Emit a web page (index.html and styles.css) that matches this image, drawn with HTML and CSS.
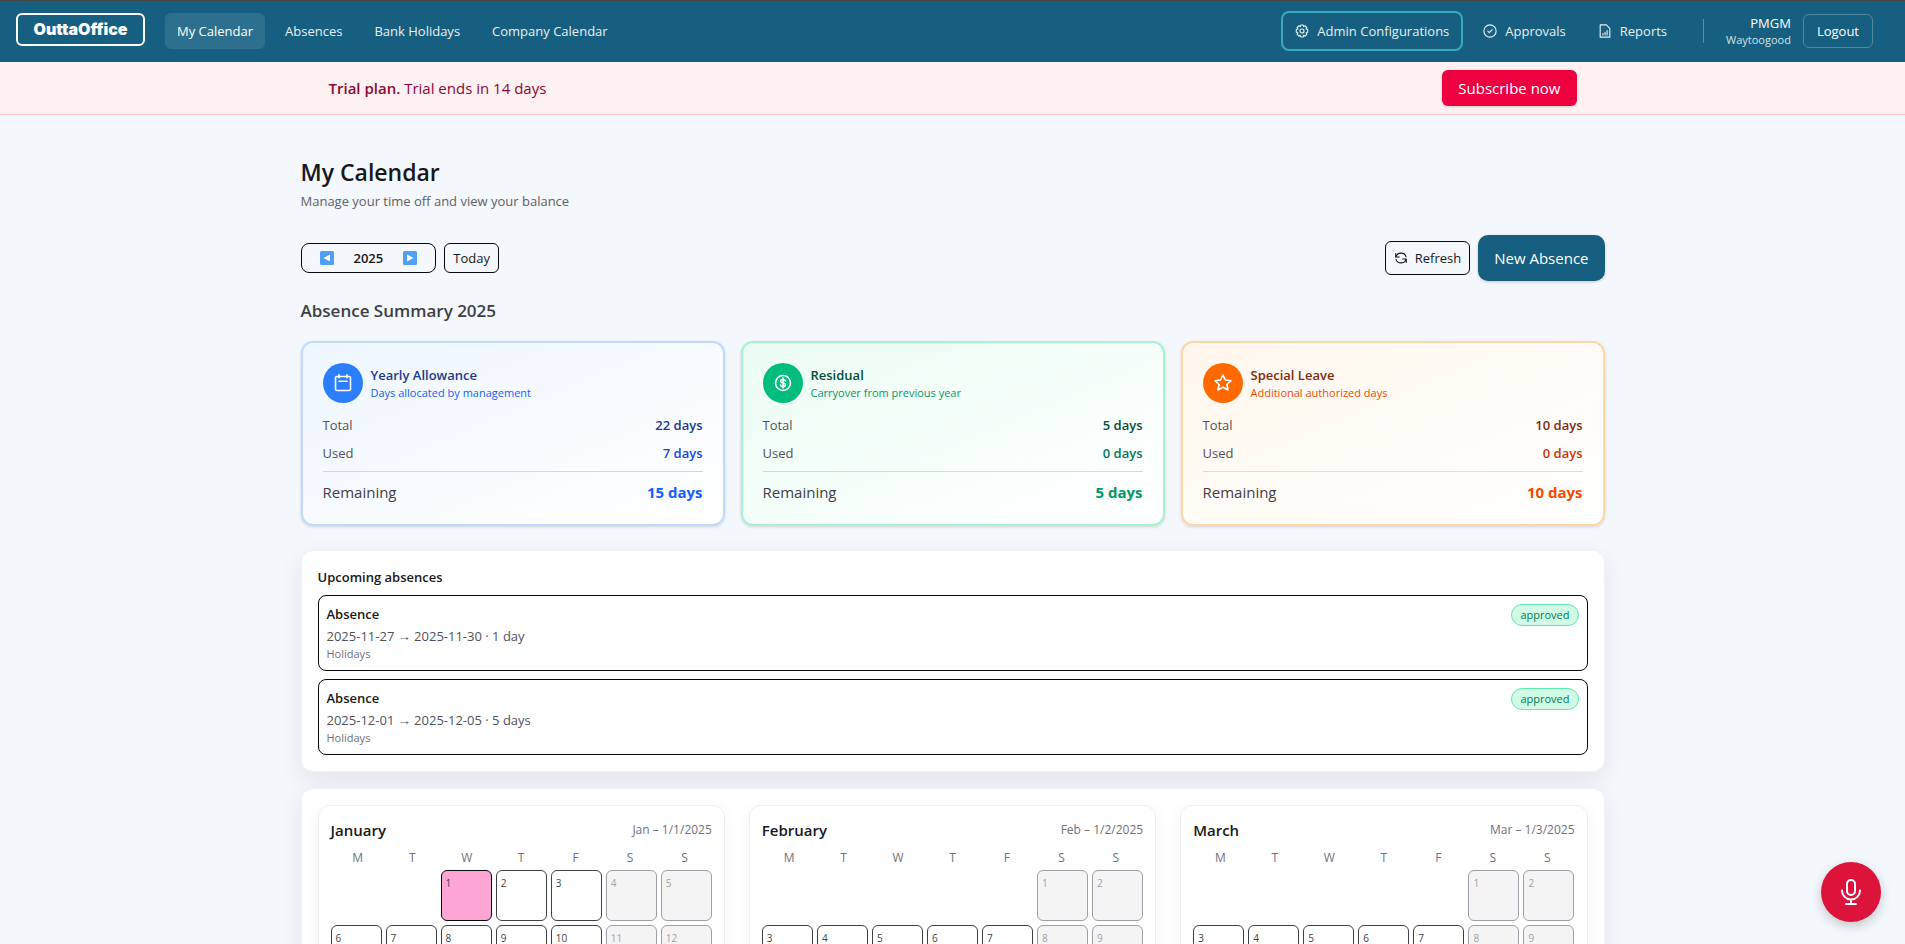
FILE: index.html
```html
<!DOCTYPE html>
<html lang="en">
<head>
  <meta charset="UTF-8" />
  <meta name="viewport" content="width=device-width, initial-scale=1.0"/>
  <title>My Calendar - OuttaOffice</title>
  <link rel="stylesheet" href="styles.css">
</head>
<body>
  <header class="navbar">
    <a class="logo" href="#">OuttaOffice</a>
    <nav class="nav-links">
      <a class="nav-link active" href="#">My Calendar</a>
      <a class="nav-link" href="#">Absences</a>
      <a class="nav-link" href="#">Bank Holidays</a>
      <a class="nav-link" href="#">Company Calendar</a>
    </nav>
    <nav class="nav-links nav-admin">
      <a class="nav-link outlined" href="#">
        <svg class="icon" viewBox="0 0 16 16"><path d="M6.600 1.200h2.800l.5 1.700 1.600-.9 2 2-.9 1.600 1.900.7v3.200l-1.900.7.9 1.600-2 2-1.600-.9-.5 1.900H6.600l-.5-1.900-1.600.9-2-2 .9-1.600-1.900-.7V6.300l1.900-.7-.9-1.600 2-2 1.600.9z"/><circle cx="8" cy="8" r="2.300"/></svg>
        Admin Configurations
      </a>
      <a class="nav-link" href="#">
        <svg class="icon" viewBox="0 0 16 16"><circle cx="8" cy="8" r="7"/><path d="M5.500 8.200l1.700 1.700 3.300-3.500"/></svg>
        Approvals
      </a>
      <a class="nav-link" href="#">
        <svg class="icon" viewBox="0 0 16 16"><path d="M3.500 1h6l4 4v10h-11V1z"/><path d="M5.600 12.500v-1.500M8 12.500V9.500M10.400 12.500V7.500"/></svg>
        Reports
      </a>
    </nav>
    <span class="nav-divider"></span>
    <div class="user">
      <span class="user-name">PMGM</span>
      <span class="user-company">Waytoogood</span>
    </div>
    <button class="logout" type="button">Logout</button>
  </header>

  <!-- Trial banner -->
  <div class="banner">
    <div class="banner-inner">
      <p><strong>Trial plan.</strong> Trial ends in 14 days</p>
      <button class="subscribe" type="button">Subscribe now</button>
    </div>
  </div>

  <main class="content">
    <h1>My Calendar</h1>
    <p class="subtitle">Manage your time off and view your balance</p>

    <div class="toolbar">
      <div class="year-picker">
        <button type="button" aria-label="Previous year"><svg class="arrow" viewBox="0 0 14 14"><rect width="14" height="14" rx="1.500"/><path d="M10 3.500v7L3.500 7z"/></svg></button>
        <span>2025</span>
        <button type="button" aria-label="Next year"><svg class="arrow" viewBox="0 0 14 14"><rect width="14" height="14" rx="1.500"/><path d="M4 3.500v7L10.500 7z"/></svg></button>
      </div>
      <button class="btn-small" type="button">Today</button>
      <button class="btn-refresh" type="button">
        <svg class="icon" viewBox="0 0 16 16"><path d="M2 2.800v4h4M14 13.200v-4h-4"/><path d="M2.300 6.500A6 6 0 0 1 13.700 6.500M13.700 9.500A6 6 0 0 1 2.300 9.500"/></svg>
        Refresh
      </button>
      <button class="btn-new" type="button">New Absence</button>
    </div>

    <h2>Absence Summary 2025</h2>

    <div class="summary">
      <section class="card blue">
        <div class="card-head">
          <span class="card-icon"><svg viewBox="0 0 20 20"><rect x="2.500" y="3.500" width="15" height="14" rx="1.500"/><path d="M6 1.800v3M14 1.800v3M6 8.200h8"/></svg></span>
          <div>
            <h3>Yearly Allowance</h3>
            <p>Days allocated by management</p>
          </div>
        </div>
        <div class="row"><span>Total</span><b class="total">22 days</b></div>
        <div class="row"><span>Used</span><b class="used">7 days</b></div>
        <div class="row remaining"><span>Remaining</span><b>15 days</b></div>
      </section>

      <section class="card green">
        <div class="card-head">
          <span class="card-icon"><svg viewBox="0 0 20 20"><circle cx="10" cy="10" r="7.500"/><path d="M12.500 7.800c-.4-.9-1.300-1.300-2.500-1.300-1.400 0-2.400.6-2.400 1.700 0 2.500 4.900 1.100 4.900 3.600 0 1.100-1.100 1.700-2.500 1.700-1.200 0-2.200-.5-2.600-1.400M10 5v10"/></svg></span>
          <div>
            <h3>Residual</h3>
            <p>Carryover from previous year</p>
          </div>
        </div>
        <div class="row"><span>Total</span><b class="total">5 days</b></div>
        <div class="row"><span>Used</span><b class="used">0 days</b></div>
        <div class="row remaining"><span>Remaining</span><b>5 days</b></div>
      </section>

      <section class="card orange">
        <div class="card-head">
          <span class="card-icon"><svg viewBox="0 0 20 20"><path d="M10 2l2.400 5 5.600.7-4.100 3.800 1.100 5.500-5-2.700L5 17l1.100-5.500L2 7.700 7.600 7z"/></svg></span>
          <div>
            <h3>Special Leave</h3>
            <p>Additional authorized days</p>
          </div>
        </div>
        <div class="row"><span>Total</span><b class="total">10 days</b></div>
        <div class="row"><span>Used</span><b class="used">0 days</b></div>
        <div class="row remaining"><span>Remaining</span><b>10 days</b></div>
      </section>
    </div>

    <!-- Upcoming absences -->
    <section class="panel upcoming">
      <h3>Upcoming absences</h3>
      <ul class="absences">
        <li>
          <div class="absence-head"><b>Absence</b><span class="badge">approved</span></div>
          <p class="dates">2025-11-27 → 2025-11-30 · 1 day</p>
          <p class="type">Holidays</p>
        </li>
        <li>
          <div class="absence-head"><b>Absence</b><span class="badge">approved</span></div>
          <p class="dates">2025-12-01 → 2025-12-05 · 5 days</p>
          <p class="type">Holidays</p>
        </li>
      </ul>
    </section>

    <!-- Year calendar -->
    <section class="panel months">
      <article class="month">
        <div class="month-head"><h3>January</h3><span>Jan – 1/1/2025</span></div>
        <div class="weekdays"><span>M</span><span>T</span><span>W</span><span>T</span><span>F</span><span>S</span><span>S</span></div>
        <div class="days">
          <span></span><span></span>
          <button class="day holiday" type="button">1</button>
          <button class="day" type="button">2</button>
          <button class="day" type="button">3</button>
          <button class="day weekend" type="button">4</button>
          <button class="day weekend" type="button">5</button>
          <button class="day" type="button">6</button>
          <button class="day" type="button">7</button>
          <button class="day" type="button">8</button>
          <button class="day" type="button">9</button>
          <button class="day" type="button">10</button>
          <button class="day weekend" type="button">11</button>
          <button class="day weekend" type="button">12</button>
        </div>
      </article>

      <article class="month">
        <div class="month-head"><h3>February</h3><span>Feb – 1/2/2025</span></div>
        <div class="weekdays"><span>M</span><span>T</span><span>W</span><span>T</span><span>F</span><span>S</span><span>S</span></div>
        <div class="days">
          <span></span><span></span><span></span><span></span><span></span>
          <button class="day weekend" type="button">1</button>
          <button class="day weekend" type="button">2</button>
          <button class="day" type="button">3</button>
          <button class="day" type="button">4</button>
          <button class="day" type="button">5</button>
          <button class="day" type="button">6</button>
          <button class="day" type="button">7</button>
          <button class="day weekend" type="button">8</button>
          <button class="day weekend" type="button">9</button>
        </div>
      </article>

      <article class="month">
        <div class="month-head"><h3>March</h3><span>Mar – 1/3/2025</span></div>
        <div class="weekdays"><span>M</span><span>T</span><span>W</span><span>T</span><span>F</span><span>S</span><span>S</span></div>
        <div class="days">
          <span></span><span></span><span></span><span></span><span></span>
          <button class="day weekend" type="button">1</button>
          <button class="day weekend" type="button">2</button>
          <button class="day" type="button">3</button>
          <button class="day" type="button">4</button>
          <button class="day" type="button">5</button>
          <button class="day" type="button">6</button>
          <button class="day" type="button">7</button>
          <button class="day weekend" type="button">8</button>
          <button class="day weekend" type="button">9</button>
        </div>
      </article>
    </section>
  </main>

  <button class="mic" type="button" aria-label="Voice assistant">
    <svg viewBox="0 0 28 28"><rect x="10" y="2" width="8" height="15" rx="4"/><path d="M5 12.500a9 9 0 0 0 18 0M14 21.500v4M9 26h10"/></svg>
  </button>
</body>
</html>
```

FILE: styles.css
```css
* { box-sizing: border-box; margin: 0; padding: 0; }
body {
  height: 100vh;
  overflow: hidden;
  font-family: 'Segoe UI', 'Open Sans', 'Noto Sans', sans-serif;
  font-size: 13px;
  line-height: 20px;
  color: #18181b;
  background: #f4f7fb;
}
a { color: inherit; text-decoration: none; }
button {
  font: inherit;
  color: inherit;
  background: none;
  border: none;
  cursor: pointer;
}
svg {
  fill: none;
  stroke: currentColor;
  stroke-linecap: round;
  stroke-linejoin: round;
}
.icon { width: 14px; height: 14px; stroke-width: 1.3; }

/* Navbar */
.navbar {
  display: flex;
  align-items: center;
  height: 62px;
  padding: 0 32px 1px 16px;
  border-top: 1px solid #444746;
  background: #165f81;
  color: #fff;
}
.logo {
  width: 129px;
  height: 33px;
  margin: 0 20px 3px 0;
  border: 2px solid #fff;
  border-radius: 6px;
  font-family: Inter, 'Open Sans', sans-serif;
  font-size: 16px;
  font-weight: 900;
  line-height: 28px;
  text-align: center;
}
.nav-links { display: flex; align-items: center; gap: 8px; }
.nav-link {
  display: flex;
  align-items: center;
  gap: 8px;
  height: 36px;
  padding: 0 12px;
  border-radius: 6px;
  font-weight: 500;
  color: #e8eff2;
}
.nav-link.active { background: #2d6f8e; color: #fff; }
.nav-link.outlined {
  height: 40px;
  border: 2px solid #39a9bf;
  border-radius: 8px;
}
.nav-admin { margin-left: auto; }
.nav-divider {
  width: 1px;
  height: 24px;
  margin: 0 22px 0 24px;
  background: #5c8fa7;
}
.user {
  display: flex;
  flex-direction: column;
  margin-right: 12px;
  text-align: right;
  font-weight: 500;
}
.user-name { line-height: 18px; }
.user-company { font-size: 11px; line-height: 16px; color: #d5e2e8; }
.logout {
  height: 34px;
  padding: 0 13px;
  border: 1px solid #4f88a1;
  border-radius: 6px;
  font-weight: 500;
}

/* Trial banner */
.banner { border-bottom: 1px solid #ffccd3; background: #fff0f1; }
.banner-inner {
  display: flex;
  align-items: center;
  justify-content: space-between;
  max-width: 1280px;
  margin: 0 auto;
  padding: 8px 16px;
  font-size: 15px;
  color: #8b0836;
}
.banner strong { font-weight: 600; }
.subscribe {
  height: 36px;
  padding: 0 16px;
  border-radius: 6px;
  background: #ec003f;
  color: #fff;
  font-weight: 500;
  box-shadow: 0 1px 3px rgba(0,0,0,0.15);
}

/* Page */
.content {
  max-width: 1400px;
  margin: 0 auto;
  padding: 41px 48px 32px;
}
h1 { font-size: 23px; font-weight: 600; line-height: 32px; }
.subtitle { margin-top: 3px; color: #5f6068; }
.toolbar {
  display: flex;
  align-items: center;
  gap: 8px;
  margin-top: 24px;
}
.year-picker, .btn-small, .btn-refresh {
  display: flex;
  align-items: center;
  border: 1px solid #09090b;
  border-radius: 6px;
}
.year-picker { height: 30px; padding: 0 4px; border-radius: 8px; }
.year-picker button { display: flex; padding: 0 14px; }
.year-picker span { padding: 0 6px; font-weight: 600; }
.arrow { width: 14px; height: 14px; stroke: none; }
.arrow rect { fill: #4f9ff4; }
.arrow path { fill: #fff; }
.btn-small { height: 30px; padding: 0 8px; }
.btn-refresh { gap: 7px; height: 34px; margin-left: auto; padding: 0 8px; }
.btn-new {
  height: 46px;
  padding: 0 16px;
  border-radius: 10px;
  background: #165f81;
  color: #fff;
  font-size: 15px;
  font-weight: 500;
  box-shadow: 0 1px 3px rgba(0,0,0,0.2);
}
h2 {
  margin: 16px 0;
  font-size: 17px;
  font-weight: 600;
  line-height: 28px;
  color: #3f3f46;
}

/* Summary cards */
.summary { display: grid; grid-template-columns: repeat(3, 1fr); gap: 16px; }
.card {
  display: flex;
  flex-direction: column;
  gap: 8px;
  padding: 20px;
  border: 2px solid;
  border-radius: 12px;
  box-shadow: 0 1px 3px rgba(0,0,0,0.15);
}
.card-head {
  display: flex;
  align-items: center;
  gap: 8px;
  margin-bottom: 4px;
}
.card-icon {
  display: grid;
  place-items: center;
  width: 40px;
  height: 40px;
  border-radius: 50%;
  color: #fff;
}
.card-icon svg { width: 20px; height: 20px; stroke-width: 1.6; }
.card h3 { font-size: 13px; font-weight: 600; }
.card p { font-size: 11px; line-height: 16px; }
.row {
  display: flex;
  align-items: center;
  justify-content: space-between;
  color: #52525c;
}
.row b { font-weight: 600; }
.remaining {
  padding-top: 8px;
  border-top: 1px solid;
  font-size: 15px;
  line-height: 24px;
}
.remaining span { font-weight: 500; color: #3f3f46; }
.remaining b { font-weight: 700; }

.blue { border-color: #bedbff; background: linear-gradient(to bottom right, #eff6ff, #fff); }
.blue .card-icon { background: #2b7fff; }
.blue h3, .blue .total { color: #1c398e; }
.blue p, .blue .remaining b { color: #155dfc; }
.blue .used { color: #1447e6; }
.blue .remaining { border-color: #bedbff; }

.green { border-color: #a4f4cf; background: linear-gradient(to bottom right, #ecfdf5, #fff); }
.green .card-icon { background: #00bc7d; }
.green h3, .green .total { color: #004f3b; }
.green p, .green .remaining b { color: #009966; }
.green .used { color: #007a55; }
.green .remaining { border-color: #a4f4cf; }

.orange { border-color: #ffd6a7; background: linear-gradient(to bottom right, #fff7ed, #fff); }
.orange .card-icon { background: #ff6900; }
.orange h3, .orange .total { color: #7e2a0c; }
.orange p, .orange .remaining b { color: #f54900; }
.orange .used { color: #ca3500; }
.orange .remaining { border-color: #ffd6a7; }

/* Panels */
.panel {
  padding: 16px;
  border: 1px solid #f1f2f5;
  border-radius: 12px;
  background: #fff;
  box-shadow: 0 8px 24px rgba(24,24,40,0.08);
}
.upcoming { margin: 24px 0 16px; }
.upcoming h3 { margin-bottom: 8px; font-size: 13px; font-weight: 600; }
.absences { display: grid; gap: 8px; list-style: none; }
.absences li {
  padding: 8px;
  border: 1px solid #09090b;
  border-radius: 8px;
}
.absence-head { display: flex; justify-content: space-between; }
.absence-head b { font-weight: 600; }
.badge {
  padding: 2px 8px;
  border: 1px solid #5ee9b5;
  border-radius: 11px;
  background: #d0fae5;
  color: #007a55;
  font-size: 11px;
  line-height: 16px;
}
.dates { color: #52525c; }
.type { font-size: 11px; line-height: 16px; color: #71717b; }

/* Months */
.months { display: grid; grid-template-columns: repeat(3, 1fr); gap: 24px; }
.month {
  padding: 12px;
  border: 1px solid #efeff2;
  border-radius: 12px;
  background: #fff;
  box-shadow: 0 4px 16px rgba(24,24,40,0.05);
}
.month-head {
  display: flex;
  align-items: center;
  justify-content: space-between;
  margin-bottom: 8px;
}
.month-head h3 { font-size: 15px; font-weight: 600; line-height: 24px; }
.month-head span { font-size: 12px; color: #71717b; }
.weekdays, .days { display: grid; grid-template-columns: repeat(7, 1fr); }
.weekdays {
  margin-bottom: 4px;
  font-size: 12px;
  line-height: 16px;
  text-align: center;
  color: #71717b;
}
.days { gap: 4px; }
.day {
  display: flex;
  aspect-ratio: 1;
  padding: 4px;
  border: 1px solid #3f3f46;
  border-radius: 6px;
  font-size: 10px;
  line-height: 16px;
  color: #3f3f46;
}
.day.weekend { border-color: #9f9fa9; background: #f4f4f5; color: #9f9fa9; }
.day.holiday { border-color: #09090b; background: #fda5d5; }

/* Floating mic button */
.mic {
  position: fixed;
  right: 24px;
  bottom: 22px;
  display: grid;
  place-items: center;
  width: 60px;
  height: 60px;
  border-radius: 50%;
  background: #dc143c;
  color: #fff;
  box-shadow: 0 4px 12px rgba(0,0,0,0.2);
}
.mic svg { width: 28px; height: 28px; stroke-width: 2; }
```
